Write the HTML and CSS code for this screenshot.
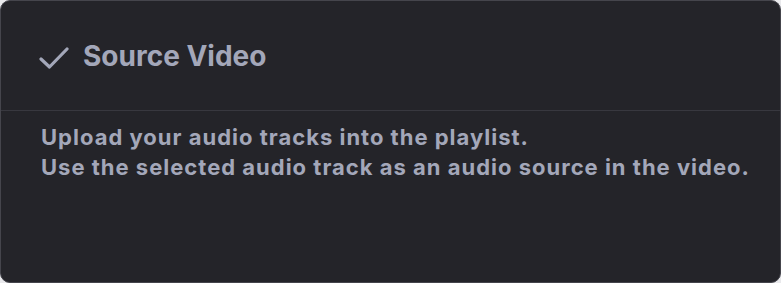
FILE: index.html
```html
<!DOCTYPE html>
<html>
<head>
<meta charset="utf-8">
<link rel="stylesheet" href="styles.css">
</head>
<body>
<div class="card">
  <div class="header">
    <svg class="check" width="30" height="22" viewBox="0 0 30 22"><path d="M2 12 L10.5 20 L28 2" fill="none" stroke="#a3a7b9" stroke-width="3.2" stroke-linecap="round" stroke-linejoin="round"/></svg>
    <h2 class="title">Source Video</h2>
  </div>
  <div class="body">
    <p class="text">Upload your audio tracks into the playlist.<br>Use the selected audio track as an audio source in the video.</p>
  </div>
</div>
</body>
</html>
```
FILE: styles.css
```css
html, body {
  margin: 0;
  padding: 0;
  background: #e9e9ec;
}
.card {
  box-sizing: border-box;
  width: 781px;
  height: 283px;
  background: #242429;
  border: 1px solid #45454c;
  border-radius: 10px;
  font-family: Inter, "Noto Sans", sans-serif;
  color: #a3a7b9;
  overflow: hidden;
}
.header {
  display: flex;
  align-items: center;
  gap: 14px;
  height: 109px;
  padding-left: 38px;
  border-bottom: 1px solid #38383f;
}
.check {
  display: block;
  margin-top: 4px;
}
.title {
  margin: 0;
  font-size: 28px;
  font-weight: 700;
  color: #a3a7b9;
}
.body {
  padding: 11px 16px 11px 40px;
}
.text {
  margin: 0;
  font-size: 22px;
  font-weight: 700;
  line-height: 30px;
  letter-spacing: 1px;
  white-space: nowrap;
}
```
